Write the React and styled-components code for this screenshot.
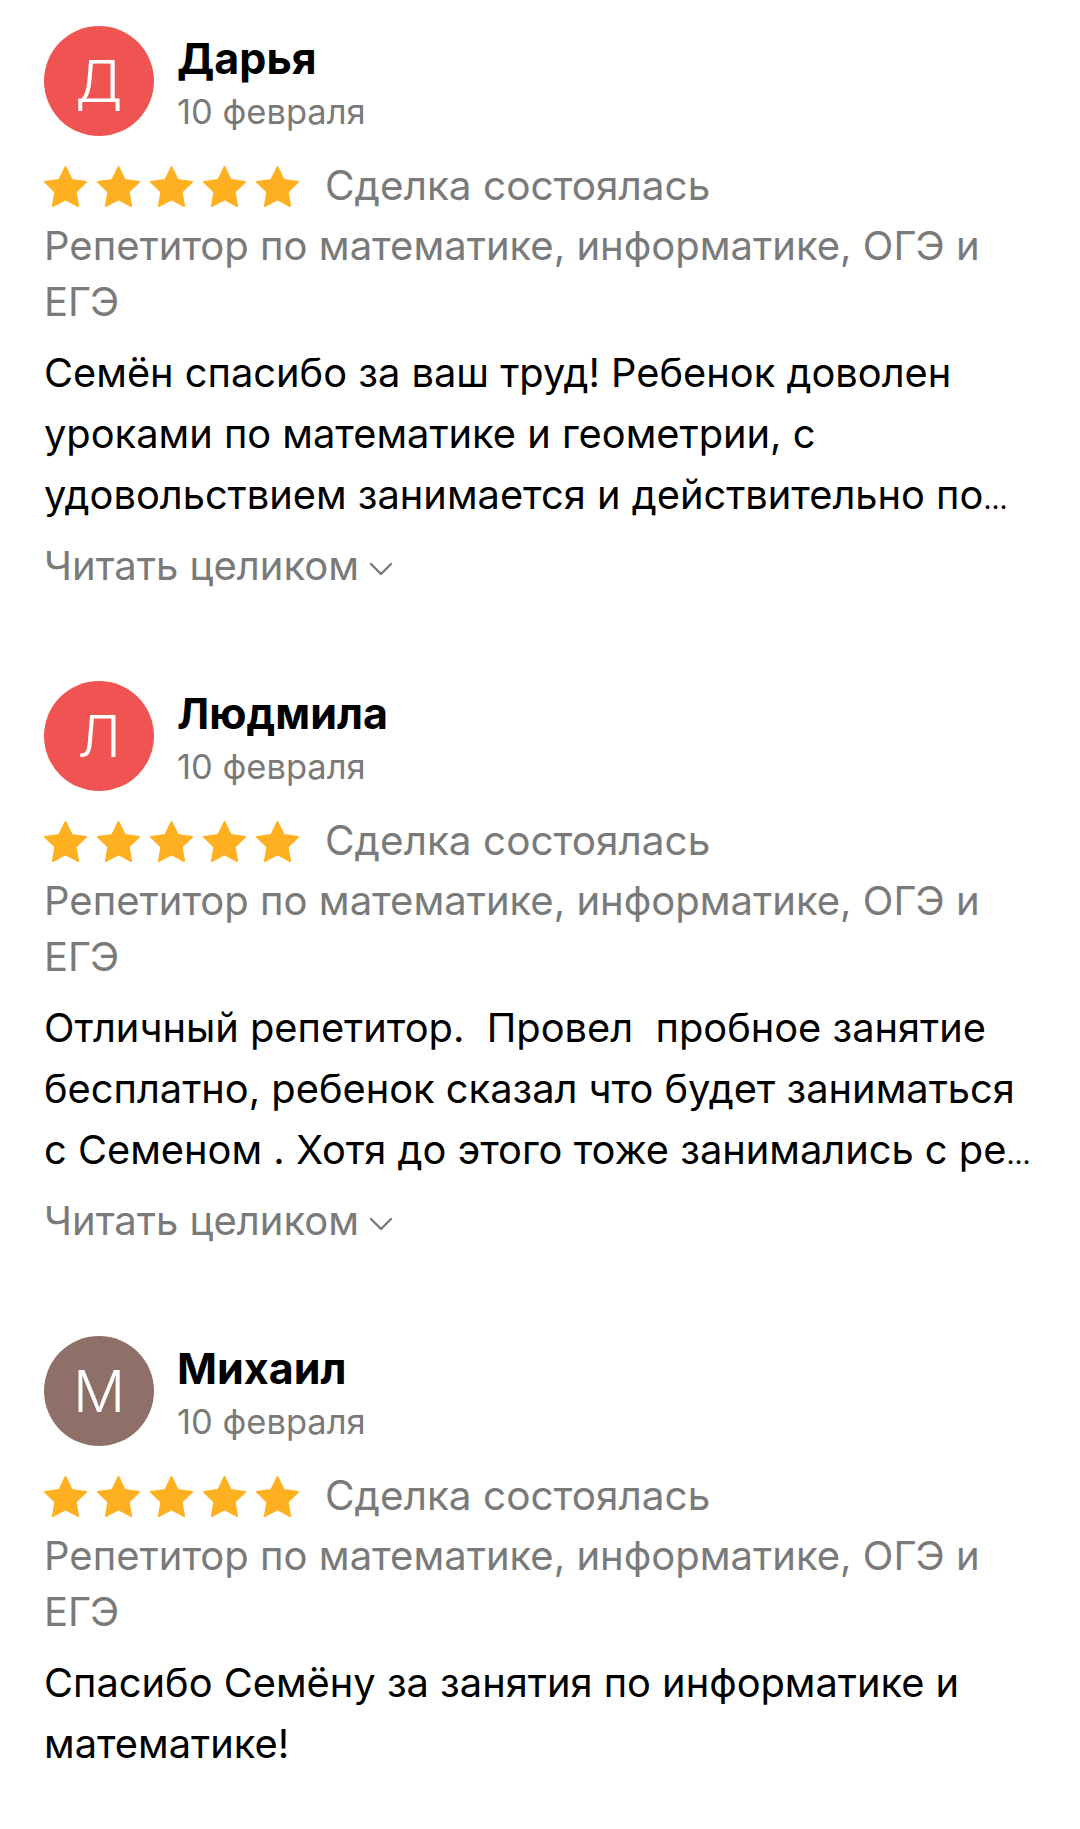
import React from "react";
import styled, { createGlobalStyle } from "styled-components";

const GlobalStyle = createGlobalStyle`
  html, body {
    margin: 0;
    padding: 0;
    background: #ffffff;
  }
  body {
    font-family: Inter, "Noto Sans", "Liberation Sans", sans-serif;
    -webkit-font-smoothing: antialiased;
  }
`;

const Page = styled.main`
  width: 1080px;
  min-height: 1829px;
  box-sizing: border-box;
  padding: 26px 44px 0;
  display: flex;
  flex-direction: column;
  gap: 87px;
  background: #fff;
`;

const Review = styled.article`
  display: flex;
  flex-direction: column;
`;

const Header = styled.header`
  display: flex;
  align-items: flex-start;
  gap: 23px;
`;

const Avatar = styled.div`
  width: 110px;
  height: 110px;
  flex: none;
  border-radius: 50%;
  background: ${(p) => p.$color};
  color: #fff;
  display: flex;
  align-items: center;
  justify-content: center;
  font-size: 58px;
  font-weight: 300;
  line-height: 1;
`;

const Who = styled.div`
  display: flex;
  flex-direction: column;
  padding-top: 7px;
`;

const Name = styled.div`
  font-size: 43px;
  line-height: 50px;
  font-weight: 700;
  color: #000;
`;

const DateText = styled.div`
  font-size: 34.5px;
  line-height: 58px;
  color: #7a7a7a;
`;

const RatingRow = styled.div`
  display: flex;
  align-items: center;
  margin-top: 20px;
  height: 50px;
`;

const Stars = styled.div`
  display: flex;
  gap: 10px;
  margin-right: 26px;
`;

const StarSvg = styled.svg`
  width: 43px;
  height: 41px;
  display: block;
`;

const Status = styled.span`
  font-size: 40.5px;
  line-height: 50px;
  color: #7a7a7a;
`;

const Category = styled.div`
  margin-top: 7px;
  font-size: 40px;
  line-height: 56px;
  color: #7a7a7a;
`;

const Body = styled.p`
  margin: 12px 0 0;
  font-size: 39.8px;
  line-height: 61px;
  color: #000;
  white-space: pre-wrap;
`;

const Dots = styled.span`
  font-size: 28px;
  line-height: 0;
`;

const ReadMore = styled.button`
  margin-top: 13px;
  padding: 0;
  border: none;
  background: none;
  align-self: flex-start;
  display: flex;
  align-items: center;
  gap: 9px;
  font-family: inherit;
  font-size: 40px;
  line-height: 56px;
  color: #7a7a7a;
  cursor: pointer;
`;

const Chevron = styled.svg`
  width: 26px;
  height: 16px;
  display: block;
  margin-top: 6px;
`;

const Star = () => (
  <StarSvg viewBox="1.6 1.6 20.8 19.8" aria-hidden="true">
    <path
      d="M12 2l3.09 6.26L22 9.27l-5 4.87 1.18 6.88L12 17.77l-6.18 3.25L7 14.14 2 9.27l6.91-1.01L12 2z"
      fill="#FFB021"
      stroke="#FFB021"
      strokeWidth="0.8"
      strokeLinejoin="round"
    />
  </StarSvg>
);

const ChevronIcon = () => (
  <Chevron viewBox="0 0 26 16" aria-hidden="true">
    <polyline
      points="3,3 13,13 23,3"
      fill="none"
      stroke="#7a7a7a"
      strokeWidth="2.4"
      strokeLinecap="round"
      strokeLinejoin="round"
    />
  </Chevron>
);

const reviews = [
  {
    initial: "Д",
    color: "#F05452",
    name: "Дарья",
    date: "10 февраля",
    text:
      "Семён спасибо за ваш труд! Ребенок доволен уроками по математике и геометрии, с удовольствием занимается и действительно по",
    more: true,
  },
  {
    initial: "Л",
    color: "#F05452",
    name: "Людмила",
    date: "10 февраля",
    text:
      "Отличный репетитор.  Провел  пробное занятие бесплатно, ребенок сказал что будет заниматься с Семеном . Хотя до этого тоже занимались с ре",
    more: true,
  },
  {
    initial: "М",
    color: "#8E7068",
    name: "Михаил",
    date: "10 февраля",
    text: "Спасибо Семёну за занятия по информатике и математике!",
    more: false,
  },
];

export default function App() {
  return (
    <>
      <GlobalStyle />
      <Page>
        {reviews.map((r, i) => (
          <Review key={i}>
            <Header>
              <Avatar $color={r.color}>{r.initial}</Avatar>
              <Who>
                <Name>{r.name}</Name>
                <DateText>{r.date}</DateText>
              </Who>
            </Header>
            <RatingRow>
              <Stars>
                {[0, 1, 2, 3, 4].map((s) => (
                  <Star key={s} />
                ))}
              </Stars>
              <Status>Сделка состоялась</Status>
            </RatingRow>
            <Category>Репетитор по математике, информатике, ОГЭ и ЕГЭ</Category>
            <Body>
              {r.text}
              {r.more && <Dots>...</Dots>}
            </Body>
            {r.more && (
              <ReadMore type="button">
                Читать целиком
                <ChevronIcon />
              </ReadMore>
            )}
          </Review>
        ))}
      </Page>
    </>
  );
}
